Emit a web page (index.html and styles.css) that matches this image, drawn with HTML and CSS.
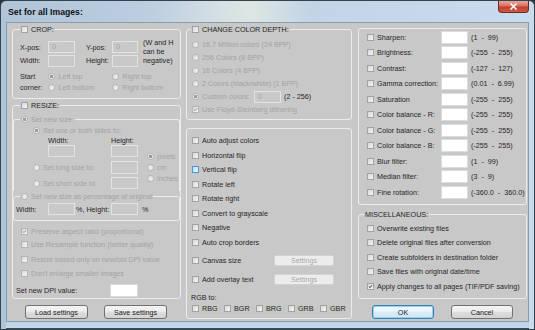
FILE: index.html
```html
<!DOCTYPE html>
<html lang="en">
<head>
    <meta charset="UTF-8">
    <title>Set for all Images</title>
    <link rel="stylesheet" href="styles.css">
</head>
<body>
    <div class="window">
        <div class="titlebar">
            <span class="title">Set for all Images:</span>
            <span class="close"><svg width="9" height="7" viewBox="0 0 9 7"><path d="M1.5 0.5 L7.5 6.5 M7.5 0.5 L1.5 6.5" stroke="#fff" stroke-width="1.6"/></svg></span>
        </div>

        <div class="client">
            <!-- left column -->
            <div class="col col-left">
                <fieldset class="group crop">
                    <legend><span class="cb"></span>CROP:</legend>
                    <div class="crop-pos">
                        <span>X-pos:</span><span class="field dis">0</span>
                        <span>Y-pos:</span><span class="field dis narrow">0</span>
                        <span class="note">(W and H<br>can be<br>negative)</span>
                        <span>Width:</span><span class="field dis"></span>
                        <span>Height:</span><span class="field dis narrow"></span>
                    </div>
                    <div class="crop-corner">
                        <span class="corner">Start<br>corner:</span>
                        <span class="opt dis"><span class="rb on"></span>Left top</span>
                        <span class="opt dis"><span class="rb"></span>Right top</span>
                        <span class="opt dis"><span class="rb"></span>Left bottom</span>
                        <span class="opt dis"><span class="rb"></span>Right bottom</span>
                    </div>
                </fieldset>

                <fieldset class="group resize">
                    <legend><span class="cb"></span>RESIZE:</legend>

                    <fieldset class="sub newsize">
                        <legend class="dis"><span class="rb on"></span>Set new size:</legend>
                        <div class="opt dis sides"><span class="rb on"></span>Set one or both sides to:</div>
                        <div class="size-wrap">
                            <div class="size-left">
                                <div class="row size-hd"><span class="size-lbl">Width:</span><span>Height:</span></div>
                                <div class="row size-in"><span class="field dis"></span><span class="field dis"></span></div>
                                <div class="row size-long"><span class="opt dis size-opt"><span class="rb"></span>Set long side to:</span><span class="field dis tall"></span></div>
                                <div class="row size-short"><span class="opt dis size-opt"><span class="rb"></span>Set short side to:</span><span class="field dis"></span></div>
                            </div>
                            <div class="units">
                                <div class="opt dis"><span class="rb on"></span>pixels</div>
                                <div class="opt dis"><span class="rb"></span>cm</div>
                                <div class="opt dis"><span class="rb"></span>inches</div>
                            </div>
                        </div>
                    </fieldset>

                    <fieldset class="sub pct">
                        <legend class="dis"><span class="rb"></span>Set new size as percentage of original</legend>
                        <div class="row pct-row">
                            <span class="pct-w">Width:</span><span class="field dis"></span>
                            <span class="pct-h">%, Height:</span><span class="field dis"></span>
                            <span class="pct-end">%</span>
                        </div>
                    </fieldset>

                    <div class="opt dis chk chk-1"><span class="cb on"><svg viewBox="0 0 7 7"><path d="M1.3 3.6 L2.9 5.1 L5.7 1.6"/></svg></span>Preserve aspect ratio (proportional)</div>
                    <div class="opt dis chk chk-2"><span class="cb"></span>Use Resample function (better quality)</div>
                    <div class="opt dis chk chk-3"><span class="cb"></span>Resize based only on new/old DPI value</div>
                    <div class="opt dis chk chk-4"><span class="cb"></span>Don't enlarge smaller images</div>

                    <div class="row dpi"><span class="dpi-lbl">Set new DPI value:</span><span class="field wide tall"></span></div>
                </fieldset>

                <div class="btns btns-left">
                    <button class="btn">Load settings</button>
                    <button class="btn">Save settings</button>
                </div>
            </div>

            <!-- middle column -->
            <div class="col col-mid">
                <fieldset class="group depth">
                    <legend><span class="cb"></span>CHANGE COLOR DEPTH:</legend>
                    <div class="opt dis d-row"><span class="rb"></span>16.7 Million colors (24 BPP)</div>
                    <div class="opt dis d-row"><span class="rb"></span>256 Colors (8 BPP)</div>
                    <div class="opt dis d-row"><span class="rb"></span>16 Colors (4 BPP)</div>
                    <div class="opt dis d-row"><span class="rb"></span>2 Colors (black/white) (1 BPP)</div>
                    <div class="row d-row custom">
                        <span class="opt dis custom-lbl"><span class="rb on"></span>Custom colors:</span>
                        <span class="field dis">0</span>
                        <span class="range">(2 - 256)</span>
                    </div>
                    <div class="opt dis d-row"><span class="cb on"><svg viewBox="0 0 7 7"><path d="M1.3 3.6 L2.9 5.1 L5.7 1.6"/></svg></span>Use Floyd-Steinberg dithering</div>
                </fieldset>

                <div class="box ops">
                    <div class="opt o-row"><span class="cb"></span>Auto adjust colors</div>
                    <div class="opt o-row"><span class="cb"></span>Horizontal flip</div>
                    <div class="opt o-row"><span class="cb hot"></span>Vertical flip</div>
                    <div class="opt o-row"><span class="cb"></span>Rotate left</div>
                    <div class="opt o-row"><span class="cb"></span>Rotate right</div>
                    <div class="opt o-row"><span class="cb"></span>Convert to grayscale</div>
                    <div class="opt o-row"><span class="cb"></span>Negative</div>
                    <div class="opt o-row"><span class="cb"></span>Auto crop borders</div>
                    <div class="row o-set canvas">
                        <span class="opt set-lbl"><span class="cb"></span>Canvas size</span>
                        <button class="btn-dis">Settings</button>
                    </div>
                    <div class="row o-set overlay">
                        <span class="opt set-lbl"><span class="cb"></span>Add overlay text</span>
                        <button class="btn-dis">Settings</button>
                    </div>
                    <div class="rgb-title">RGB to:</div>
                    <div class="row rgb">
                        <span class="opt rgb-item"><span class="cb"></span>RBG</span>
                        <span class="opt rgb-item"><span class="cb"></span>BGR</span>
                        <span class="opt rgb-item"><span class="cb"></span>BRG</span>
                        <span class="opt rgb-item"><span class="cb"></span>GRB</span>
                        <span class="opt rgb-item"><span class="cb"></span>GBR</span>
                    </div>
                </div>
            </div>

            <!-- right column -->
            <div class="col col-right">
                <div class="box filters">
                    <div class="row f-row"><span class="cb"></span><span class="f-lbl">Sharpen:</span><span class="field tall"></span><span class="range">(1  -  99)</span></div>
                    <div class="row f-row"><span class="cb"></span><span class="f-lbl">Brightness:</span><span class="field tall"></span><span class="range">(-255  -  255)</span></div>
                    <div class="row f-row"><span class="cb"></span><span class="f-lbl">Contrast:</span><span class="field tall"></span><span class="range">(-127  -  127)</span></div>
                    <div class="row f-row"><span class="cb"></span><span class="f-lbl">Gamma correction:</span><span class="field tall"></span><span class="range">(0.01  -  6.99)</span></div>
                    <div class="row f-row"><span class="cb"></span><span class="f-lbl">Saturation</span><span class="field tall"></span><span class="range">(-255  -  255)</span></div>
                    <div class="row f-row"><span class="cb"></span><span class="f-lbl">Color balance - R:</span><span class="field tall"></span><span class="range">(-255  -  255)</span></div>
                    <div class="row f-row"><span class="cb"></span><span class="f-lbl">Color balance - G:</span><span class="field tall"></span><span class="range">(-255  -  255)</span></div>
                    <div class="row f-row"><span class="cb"></span><span class="f-lbl">Color balance - B:</span><span class="field tall"></span><span class="range">(-255  -  255)</span></div>
                    <div class="row f-row"><span class="cb"></span><span class="f-lbl">Blur filter:</span><span class="field tall"></span><span class="range">(1  -  99)</span></div>
                    <div class="row f-row"><span class="cb"></span><span class="f-lbl">Median filter:</span><span class="field tall"></span><span class="range">(3  -  9)</span></div>
                    <div class="row f-row"><span class="cb"></span><span class="f-lbl">Fine rotation:</span><span class="field tall"></span><span class="range">(-360.0  -  360.0)</span></div>
                </div>

                <fieldset class="group misc">
                    <legend>MISCELLANEOUS:</legend>
                    <div class="opt m-row"><span class="cb"></span>Overwrite existing files</div>
                    <div class="opt m-row"><span class="cb"></span>Delete original files after conversion</div>
                    <div class="opt m-row"><span class="cb"></span>Create subfolders in destination folder</div>
                    <div class="opt m-row"><span class="cb"></span>Save files with original date/time</div>
                    <div class="opt m-row"><span class="cb on"><svg viewBox="0 0 7 7"><path d="M1.3 3.6 L2.9 5.1 L5.7 1.6"/></svg></span>Apply changes to all pages (TIF/PDF saving)</div>
                </fieldset>

                <div class="btns btns-right">
                    <button class="btn btn-ok">OK</button>
                    <button class="btn">Cancel</button>
                </div>
            </div>
        </div>
        <div class="frame-bottom"></div>
    </div>
</body>
</html>
```

FILE: styles.css
```css
* {
    box-sizing: border-box;
}

body {
    margin: 0;
    background: #26323e;
    font-family: "Liberation Sans", Arial, sans-serif;
    font-size: 7.2px;
    color: #262626;
}

/* window chrome */
.window {
    width: 535px;
    height: 330px;
    display: flex;
    flex-direction: column;
    padding: 0 5px;
    border: 1px solid #34424f;
    border-radius: 6px 6px 0 0;
    background: linear-gradient(90deg, #b0c4d8 0%, #bccee0 28%, #d6e1e4 42%, #dde6e2 47%, #c2d4e6 58%, #c9dcee 100%);
}

.titlebar {
    height: 21px;
    flex: none;
    display: flex;
    justify-content: space-between;
    align-items: center;
}

.title {
    padding-left: 2px;
    font-size: 8.7px;
    font-weight: bold;
    color: #111;
}

.close {
    align-self: flex-start;
    width: 31px;
    height: 12px;
    display: flex;
    align-items: center;
    justify-content: center;
    border: 1px solid #6a2b24;
    border-top: none;
    border-radius: 0 0 4px 4px;
    background: linear-gradient(#e9a79c 0%, #d66f60 45%, #c2402f 55%, #cf5a3f 100%);
}

.client {
    height: 300px;
    flex: none;
    display: flex;
    gap: 5px;
    padding: 0 1px 0 5px;
    border: 1px solid #8a9bab;
    background: #c8c8c8;
}

.frame-bottom {
    flex: 1;
    border-bottom: 1px solid #3b4a58;
    background: linear-gradient(#bcd0e4, #c6d8ea);
}

.col {
    display: flex;
    flex-direction: column;
}

.col-left {
    width: 169px;
    padding-top: 1px;
}

.col-mid {
    width: 166px;
    padding-top: 1px;
}

.col-right {
    width: 169px;
    margin-left: 1px;
}

/* group boxes */
.group,
.box {
    margin: 0;
    min-width: 0;
    border: 1px solid #ececec;
    border-radius: 3px;
}

legend {
    display: flex;
    align-items: center;
    gap: 3px;
    height: 10px;
    padding: 0 1px;
    white-space: nowrap;
}

.sub {
    margin: 0;
    min-width: 0;
    padding: 0;
    border: 1px solid #ececec;
    border-radius: 3px;
}

/* controls */
.cb,
.rb {
    flex: none;
    display: inline-block;
    width: 7px;
    height: 7px;
    border: 1px solid #a2a2a2;
    background: linear-gradient(135deg, #d8d8d8, #f6f6f6);
}

.cb svg {
    display: block;
    width: 5px;
    height: 5px;
    fill: none;
    stroke: #2a2a2a;
    stroke-width: 1.3;
}

.dis .cb svg {
    stroke: #8e8e8e;
}

.cb.hot {
    border-color: #4f94d2;
    background: linear-gradient(135deg, #bfe0f6, #e6f4fc);
}

.rb {
    border-radius: 50%;
}

.rb.on {
    background: radial-gradient(circle, #5d5d5d 0 1.4px, #ececec 1.8px);
}

.dis .rb.on {
    background: radial-gradient(circle, #9a9a9a 0 1.4px, #ececec 1.8px);
}

.dis .cb,
.dis .rb {
    border-color: #b4b4b4;
}

.opt {
    display: flex;
    align-items: center;
    gap: 3px;
    white-space: nowrap;
}

.dis {
    color: #a3a3a3;
}

.row {
    display: flex;
    align-items: center;
}

.field {
    flex: none;
    display: block;
    width: 27px;
    height: 12px;
    border: 1px solid #d8dde2;
    background: #fff;
    padding-left: 3px;
    line-height: 10px;
}

.field.dis {
    border-color: #e2e2e2;
    background: #c9c9c9;
}

.field.narrow {
    width: 26px;
}

.field.wide {
    width: 28px;
}

.field.tall {
    height: 13px;
}

.range {
    white-space: pre;
}

/* crop */
.crop {
    padding: 6px 0 5px 7px;
}

.crop-pos {
    display: grid;
    grid-template-columns: 28px 38px 26px 31px 1fr;
    grid-template-rows: 14px 13px;
    align-items: center;
}

.note {
    grid-row: span 2;
    align-self: start;
    margin-top: -2px;
    line-height: 9px;
}

.crop-corner {
    display: grid;
    grid-template-columns: 28px 64px 1fr;
    grid-template-rows: 11px 11px;
    align-items: center;
    margin-top: 4px;
}

.corner {
    grid-row: span 2;
    line-height: 11px;
}

.crop-corner .opt {
    gap: 3.5px;
}

/* resize */
.resize {
    margin-top: 1px;
    padding: 4px 0 1px 0;
}

.resize > legend {
    margin-left: 7px;
}

.sub > legend {
    margin-left: 6px;
}

.newsize {
    border-bottom: none;
    border-radius: 3px 3px 0 0;
    padding-bottom: 2px;
}

.sides {
    height: 11px;
    margin-top: 1px;
    padding-left: 19px;
}

.size-wrap {
    display: flex;
}

.size-left {
    width: 124px;
}

.size-hd {
    height: 9px;
    padding-left: 34px;
}

.size-lbl {
    width: 63px;
}

.size-in {
    height: 12px;
    padding-left: 34px;
    gap: 36px;
}

.size-long {
    height: 13px;
    margin-top: 4px;
}

.size-short {
    height: 12px;
    margin-top: 3px;
}

.size-opt {
    width: 97px;
    padding-left: 19px;
}

.units {
    margin-top: 15px;
    padding-left: 9px;
}

.units .opt {
    height: 11px;
}

.pct {
    padding-bottom: 5px;
}

.pct-row {
    height: 12px;
    margin-top: 2px;
}

.pct-w {
    width: 34px;
    padding-left: 2px;
}

.pct-h {
    width: 36px;
    padding-left: 1px;
}

.pct-end {
    padding-left: 4px;
}

.chk {
    height: 11px;
    padding-left: 8px;
}

.chk-1 {
    margin-top: 5px;
}

.chk-2 {
    margin-top: 2px;
}

.chk-3 {
    margin-top: 4px;
}

.chk-4 {
    margin-top: 3px;
}

.dpi {
    height: 13px;
    margin-top: 5px;
    padding-left: 3px;
}

.dpi-lbl {
    width: 94px;
}

/* buttons */
.btns {
    display: flex;
    margin-top: 6px;
}

.btns-left {
    padding-left: 13px;
    gap: 16px;
}

.btns-right {
    margin-top: 6.5px;
    padding-left: 14px;
    gap: 17px;
}

.btn {
    width: 63px;
    height: 14px;
    padding: 0;
    font-family: inherit;
    font-size: 7.2px;
    color: #1a1a1a;
    border: 1px solid #727272;
    border-radius: 3px;
    background: linear-gradient(#f4f4f4 0%, #ececec 45%, #dedede 50%, #d2d2d2 100%);
}

.btns-right .btn {
    width: 62px;
}

.btn-ok {
    border-color: #3b7fb4;
    box-shadow: inset 0 0 0 1px #8fd6f6;
    background: linear-gradient(#f3f9fd 0%, #e8f3fa 45%, #dbecf7 50%, #cfe5f3 100%);
}

.btn-dis {
    width: 60px;
    height: 11px;
    padding: 0;
    font-family: inherit;
    font-size: 7.2px;
    color: #a8a8a8;
    border: 1px solid #d2d2d2;
    border-radius: 2px;
    background: #ececec;
}

/* colour depth */
.depth {
    padding: 4px 0 3px 4px;
}

.depth .opt {
    padding-left: 1px;
}

.d-row {
    height: 13px;
}

.custom-lbl {
    width: 63px;
}

.custom .range {
    margin-left: 3px;
    color: #262626;
}

/* operations */
.ops {
    margin-top: 8px;
    padding: 4.5px 0 4px 4px;
}

.ops .opt {
    padding-left: 1px;
}

.o-row {
    height: 14.5px;
}

.o-set {
    height: 12px;
}

.canvas {
    margin-top: 4.5px;
}

.overlay {
    margin-top: 7px;
}

.set-lbl {
    width: 83px;
}

.rgb-title {
    height: 10px;
    line-height: 10px;
    margin-top: 8px;
}

.rgb {
    height: 10.5px;
}

.rgb-item {
    width: 33px;
}

/* filters */
.filters {
    margin-top: 5px;
    padding: 0.5px 0 3.5px 8px;
}

.f-row {
    height: 15.5px;
}

.f-lbl {
    width: 67px;
    padding-left: 3px;
}

.f-row .range {
    padding-left: 3px;
}

/* misc */
.misc {
    margin-top: 4.5px;
    padding: 2px 0 4px 8px;
}

.misc > legend {
    margin-left: -3px;
}

.m-row {
    height: 14.5px;
}
```
